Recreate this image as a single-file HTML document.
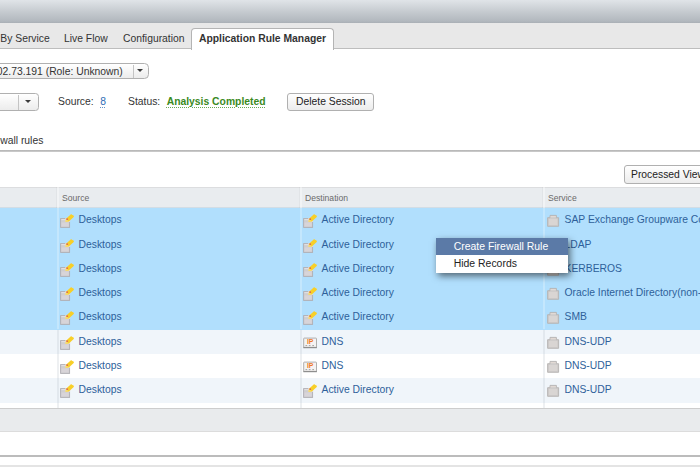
<!DOCTYPE html>
<html><head><meta charset="utf-8">
<style>
html,body{margin:0;padding:0;}
body{width:700px;height:467px;overflow:hidden;background:#fff;font-family:"Liberation Sans",Arial,sans-serif;font-size:10.35px;line-height:12px;color:#333;position:relative;}
.abs{position:absolute;}
#topbar{left:0;top:0;width:700px;height:23.3px;background:linear-gradient(#e0e4e8 0%,#c6cbd0 50%,#b2b8be 92%,#a9afb5 100%);}
#tabbar{left:0;top:23.3px;width:700px;height:24.7px;background:#e8e8e8;border-bottom:1.6px solid #bdbdbd;}
.tab{position:absolute;top:32.5px;font-size:10.35px;color:#333;white-space:nowrap;}
#acttab{left:191px;top:28px;width:141px;height:21px;background:#fff;border:1px solid #b4b4b4;border-bottom:none;border-radius:4px 4px 0 0;}
.t{position:absolute;white-space:nowrap;}
.btn{position:absolute;border:1px solid #b0b0b0;border-radius:3px;background:linear-gradient(#ffffff,#ececec);box-sizing:border-box;font-size:10.35px;color:#222;white-space:nowrap;}
.row{position:absolute;left:0;width:700px;height:24px;}
.sel{background:#b1dffd;}
.alt{background:#f0f5fa;}
.cell{position:absolute;font-size:10.35px;color:#2e5f9a;white-space:nowrap;top:6px;}
.ico{position:absolute;top:5px;}
</style></head><body>
<svg width="0" height="0" style="position:absolute">
<defs>
<symbol id="sg" viewBox="0 0 15 15">
<rect x="0.6" y="5.6" width="9" height="8.8" fill="#cfcdd0" stroke="#b0aeb3" stroke-width="0.9"/>
<rect x="1.4" y="6.3" width="4" height="0.8" fill="#e9e7ea"/>
<rect x="1.5" y="9.4" width="7.2" height="4" fill="#d8d4d8"/>
<rect x="5.4" y="5.1" width="4.7" height="3.6" fill="#f1e9ec"/>
<path d="M5.5 8.8 L6 5.7 L11.2 1.1 L12.3 2.2 L13 1.8 L14 3.7 L8.8 8.4 Z" fill="#f8cf28"/>
<path d="M6 5.7 L8.8 8.4 L5.5 8.8 Z" fill="#f6da70"/>
<circle cx="7.2" cy="6.2" r="0.9" fill="#e06a50"/>
</symbol>
<symbol id="ip" viewBox="0 0 15 15">
<rect x="0.7" y="3.1" width="12.8" height="9.4" rx="0.6" fill="#f5f3f2" stroke="#a6a6a6" stroke-width="0.9"/>
<rect x="0.3" y="11.9" width="13.6" height="1.3" fill="#8e8e8e"/>
<text x="3.9" y="9" font-family="Liberation Sans, sans-serif" font-weight="bold" font-size="6.9" fill="#ef7a26">IP</text>
<rect x="2.5" y="10.1" width="1.7" height="1" fill="#a0a0a0"/><rect x="5.8" y="10.1" width="1.7" height="1" fill="#a0a0a0"/><rect x="9.3" y="10.1" width="1.7" height="1" fill="#a0a0a0"/>
</symbol>
<symbol id="svc" viewBox="0 0 15 15">
<path d="M1.6 4.7 L4 4.7 L4 2.4 L10.4 2.4 L10.4 4.7 L12.6 4.7 L12.6 13.3 L1.6 13.3 Z" fill="#cfcccb" stroke="#b5b2b1" stroke-width="0.9"/>
<rect x="3" y="6" width="8.2" height="6" fill="#d9d5d3"/>
<rect x="4.6" y="3" width="5.2" height="1.2" fill="#e2d9d4"/>
</symbol>
</defs></svg>
<div id="topbar" class="abs"></div>
<div id="tabbar" class="abs"></div>
<div id="acttab" class="abs"></div>
<div class="tab" style="left:0.3px">By Service</div>
<div class="tab" style="left:64px">Live Flow</div>
<div class="tab" style="left:123px">Configuration</div>
<div class="tab" style="left:199px;font-weight:bold;">Application Rule Manager</div>

<div class="btn" style="left:-10px;top:62.6px;width:158.6px;height:16.6px;border-radius:4.5px;"></div>
<div class="abs" style="left:133px;top:64.5px;width:1px;height:13px;background:#c4c4c4"></div>
<div class="t" style="left:-3.2px;top:66px;">02.73.191 (Role: Unknown)</div>
<div class="abs" style="left:137.4px;top:69.2px;width:0;height:0;border-left:3.5px solid transparent;border-right:3.5px solid transparent;border-top:3.6px solid #3a3a3a;"></div>

<div class="btn" style="left:-10px;top:93px;width:49px;height:18.3px;border-radius:3.5px;"></div>
<div class="abs" style="left:18px;top:94.5px;width:1px;height:15.5px;background:#c4c4c4"></div>
<div class="abs" style="left:24.6px;top:100.2px;width:0;height:0;border-left:3px solid transparent;border-right:3px solid transparent;border-top:3.4px solid #3a3a3a;"></div>

<div class="t" style="left:58px;top:96px;">Source:</div>
<div class="t" style="left:100.3px;top:96px;color:#2e6db5;text-decoration:underline dotted rgba(46,109,181,0.75);text-decoration-thickness:1px;text-underline-offset:1.5px;">8</div>
<div class="t" style="left:128px;top:96px;">Status:</div>
<div class="t" style="left:166.7px;top:96px;color:#3a8a1e;font-weight:bold;text-decoration:underline dotted rgba(58,138,30,0.75);text-decoration-thickness:1px;text-underline-offset:1.5px;">Analysis Completed</div>
<div class="btn" style="left:286.5px;top:93px;width:87.5px;height:18px;line-height:16px;padding-left:8.5px;">Delete Session</div>

<div class="t" style="left:-17.6px;top:135px;">Firewall rules</div>
<div class="abs" style="left:0;top:150px;width:700px;height:2px;background:linear-gradient(#b2b2b2,#cfcfcf)"></div>

<div class="btn" style="left:624px;top:165px;width:90px;height:19px;line-height:17px;padding-left:6px;">Processed View</div>

<!-- table header -->
<div class="abs" style="left:0;top:186.6px;width:700px;height:21.7px;background:#e9ecef;box-shadow:inset 0 1px 0 #dcdddf, inset 0 -1px 0 #d3dde5;"></div>
<div class="t" style="left:62px;top:192px;font-size:8.6px;color:#6a6a6a;">Source</div>
<div class="t" style="left:305px;top:192px;font-size:8.6px;color:#6a6a6a;">Destination</div>
<div class="t" style="left:548px;top:192px;font-size:8.6px;color:#6a6a6a;">Service</div>

<div id="rows">
<div class="row sel" style="top:208.30px;height:24.55px"><svg class="ico" style="left:60px" width="15" height="15"><use href="#sg"/></svg><span class="cell" style="left:78.5px">Desktops</span><svg class="ico" style="left:303px" width="15" height="15"><use href="#sg"/></svg><span class="cell" style="left:321.5px">Active Directory</span><svg class="ico" style="left:546px" width="15" height="15"><use href="#svc"/></svg><span class="cell" style="left:564.5px">SAP Exchange Groupware Connector</span></div>
<div class="row sel" style="top:232.55px;height:24.55px"><svg class="ico" style="left:60px" width="15" height="15"><use href="#sg"/></svg><span class="cell" style="left:78.5px">Desktops</span><svg class="ico" style="left:303px" width="15" height="15"><use href="#sg"/></svg><span class="cell" style="left:321.5px">Active Directory</span><svg class="ico" style="left:546px" width="15" height="15"><use href="#svc"/></svg><span class="cell" style="left:564.5px">LDAP</span></div>
<div class="row sel" style="top:256.80px;height:24.55px"><svg class="ico" style="left:60px" width="15" height="15"><use href="#sg"/></svg><span class="cell" style="left:78.5px">Desktops</span><svg class="ico" style="left:303px" width="15" height="15"><use href="#sg"/></svg><span class="cell" style="left:321.5px">Active Directory</span><svg class="ico" style="left:546px" width="15" height="15"><use href="#svc"/></svg><span class="cell" style="left:564.5px">KERBEROS</span></div>
<div class="row sel" style="top:281.05px;height:24.55px"><svg class="ico" style="left:60px" width="15" height="15"><use href="#sg"/></svg><span class="cell" style="left:78.5px">Desktops</span><svg class="ico" style="left:303px" width="15" height="15"><use href="#sg"/></svg><span class="cell" style="left:321.5px">Active Directory</span><svg class="ico" style="left:546px" width="15" height="15"><use href="#svc"/></svg><span class="cell" style="left:564.5px">Oracle Internet Directory(non-SSL)</span></div>
<div class="row sel" style="top:305.30px;height:24.55px"><svg class="ico" style="left:60px" width="15" height="15"><use href="#sg"/></svg><span class="cell" style="left:78.5px">Desktops</span><svg class="ico" style="left:303px" width="15" height="15"><use href="#sg"/></svg><span class="cell" style="left:321.5px">Active Directory</span><svg class="ico" style="left:546px" width="15" height="15"><use href="#svc"/></svg><span class="cell" style="left:564.5px">SMB</span></div>
<div class="row alt" style="top:329.55px;height:24.55px"><svg class="ico" style="left:60px" width="15" height="15"><use href="#sg"/></svg><span class="cell" style="left:78.5px">Desktops</span><svg class="ico" style="left:303px" width="15" height="15"><use href="#ip"/></svg><span class="cell" style="left:321.5px">DNS</span><svg class="ico" style="left:546px" width="15" height="15"><use href="#svc"/></svg><span class="cell" style="left:564.5px">DNS-UDP</span></div>
<div class="row " style="top:353.80px;height:24.55px"><svg class="ico" style="left:60px" width="15" height="15"><use href="#sg"/></svg><span class="cell" style="left:78.5px">Desktops</span><svg class="ico" style="left:303px" width="15" height="15"><use href="#ip"/></svg><span class="cell" style="left:321.5px">DNS</span><svg class="ico" style="left:546px" width="15" height="15"><use href="#svc"/></svg><span class="cell" style="left:564.5px">DNS-UDP</span></div>
<div class="row alt" style="top:378.05px;height:24.55px"><svg class="ico" style="left:60px" width="15" height="15"><use href="#sg"/></svg><span class="cell" style="left:78.5px">Desktops</span><svg class="ico" style="left:303px" width="15" height="15"><use href="#sg"/></svg><span class="cell" style="left:321.5px">Active Directory</span><svg class="ico" style="left:546px" width="15" height="15"><use href="#svc"/></svg><span class="cell" style="left:564.5px">DNS-UDP</span></div>
</div><!--endrows-->

<!-- column separators -->
<div class="abs" style="left:57px;top:187px;width:2px;height:21.3px;background:rgba(255,255,255,0.38)"></div>
<div class="abs" style="left:56px;top:187px;width:1px;height:21.3px;background:rgba(0,0,0,0.03)"></div>
<div class="abs" style="left:57px;top:208.3px;width:2px;height:121.2px;background:rgba(255,255,255,0.25)"></div>
<div class="abs" style="left:57px;top:329.5px;width:2px;height:79px;background:rgba(170,180,190,0.2)"></div>
<div class="abs" style="left:300px;top:187px;width:2px;height:21.3px;background:rgba(255,255,255,0.38)"></div>
<div class="abs" style="left:299px;top:187px;width:1px;height:21.3px;background:rgba(0,0,0,0.03)"></div>
<div class="abs" style="left:300px;top:208.3px;width:2px;height:121.2px;background:rgba(255,255,255,0.25)"></div>
<div class="abs" style="left:300px;top:329.5px;width:2px;height:79px;background:rgba(170,180,190,0.2)"></div>
<div class="abs" style="left:543px;top:187px;width:2px;height:21.3px;background:rgba(255,255,255,0.38)"></div>
<div class="abs" style="left:542px;top:187px;width:1px;height:21.3px;background:rgba(0,0,0,0.03)"></div>
<div class="abs" style="left:543px;top:208.3px;width:2px;height:121.2px;background:rgba(255,255,255,0.25)"></div>
<div class="abs" style="left:543px;top:329.5px;width:2px;height:79px;background:rgba(170,180,190,0.2)"></div>

<div class="abs" style="left:0;top:408.3px;width:700px;height:1.5px;background:#cdcdcd"></div>
<div class="abs" style="left:0;top:409px;width:700px;height:22px;background:#e9ebed;"></div>
<div class="abs" style="left:0;top:431px;width:700px;height:1px;background:#dcdcdc"></div>
<div class="abs" style="left:0;top:455.2px;width:700px;height:1.5px;background:#bcbcbc"></div>
<div class="abs" style="left:0;top:465px;width:700px;height:2px;background:#e4e4e4"></div>

<!-- context menu -->
<div class="abs" style="left:436px;top:238px;width:131.5px;height:34.8px;background:#fff;box-shadow:2px 3px 7px rgba(0,0,0,0.55);"></div>
<div class="abs" style="left:436px;top:238px;width:131.5px;height:17px;background:#5b7aa7;"></div>
<div class="t" style="left:453.7px;top:241px;color:#fff;font-size:10.45px;">Create Firewall Rule</div>
<div class="t" style="left:453.7px;top:258px;color:#222;font-size:10.45px;">Hide Records</div>
</body></html>
